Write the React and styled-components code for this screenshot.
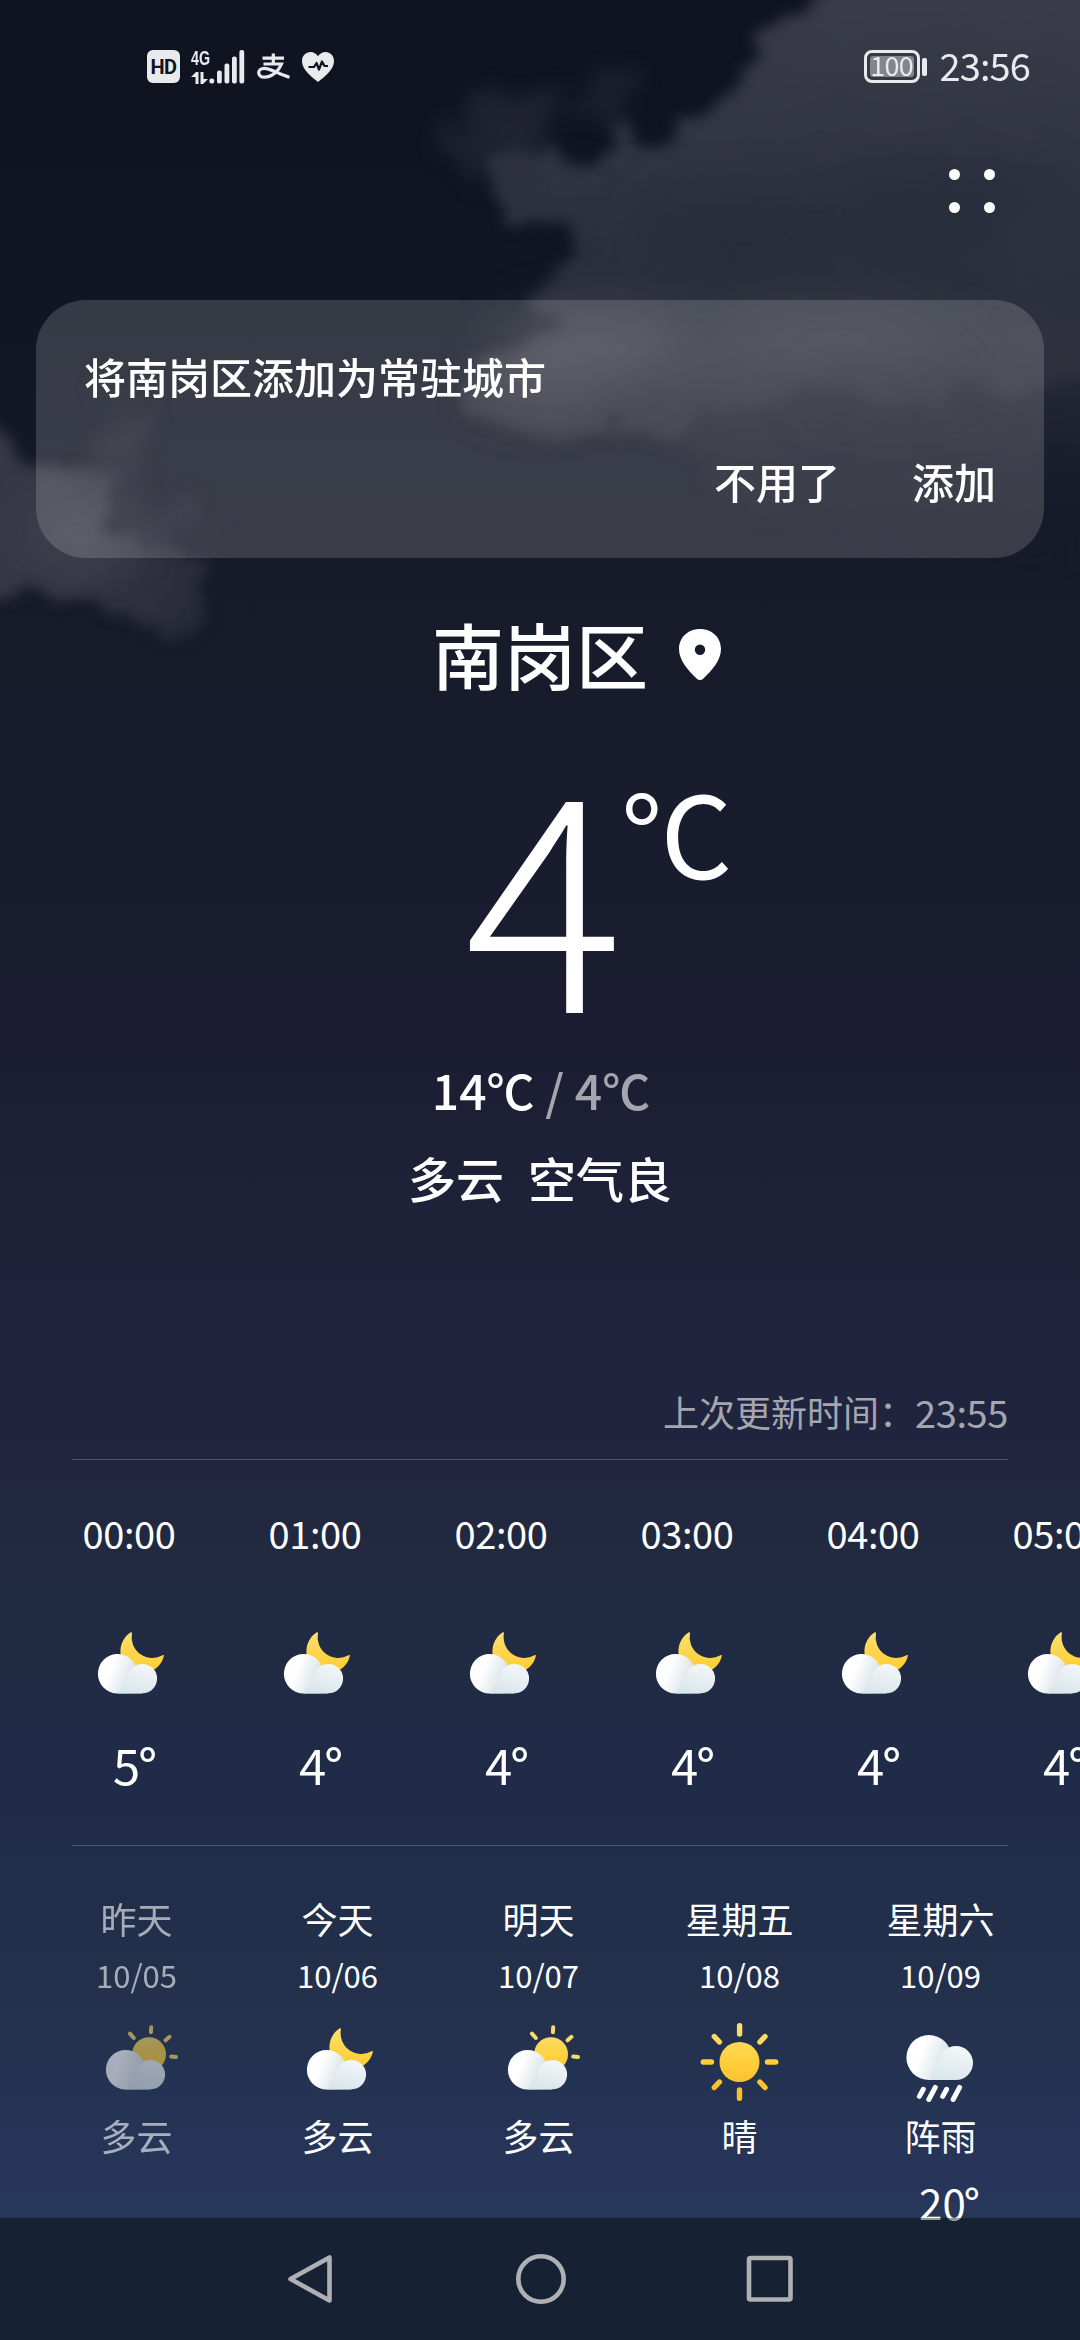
// src/App.jsx

import { useId } from "react";
import styled, { createGlobalStyle } from "styled-components";

const GlobalStyle = createGlobalStyle`
  * {
    box-sizing: border-box;
  }

  body {
    margin: 0;
    background: #101421;
    font-family: "Noto Sans CJK SC", "Noto Sans", sans-serif;
    color: #fff;
  }
`;

const Screen = styled.main`
  position: relative;
  display: flex;
  flex-direction: column;
  width: 1080px;
  height: 2340px;
  overflow: hidden;
  background: linear-gradient(
    180deg,
    #101320 0,
    #0f1522 230px,
    #171a28 560px,
    #181c2d 800px,
    #1b1c31 1020px,
    #1e2238 1200px,
    #21243e 1430px,
    #212a40 1560px,
    #1f2b48 1780px,
    #23314c 2000px,
    #26355a 2180px,
    #273857 2218px
  );
`;

const Sky = styled.svg`
  position: absolute;
  top: 0;
  left: 0;
  width: 1080px;
  height: 720px;
`;

const StatusBar = styled.header`
  position: relative;
  display: flex;
  align-items: center;
  justify-content: space-between;
  height: 133px;
  padding: 0 50px 0 147px;
`;

const StatusGroup = styled.div`
  display: flex;
  align-items: center;
  color: #e9eaee;
`;

const HdBadge = styled.span`
  display: flex;
  align-items: center;
  justify-content: center;
  width: 33px;
  height: 33px;
  border-radius: 6px;
  background: #e9eaee;
  color: #101320;
  font-family: Roboto, sans-serif;
  font-size: 20px;
  font-weight: 700;
  letter-spacing: -0.5px;
`;

const Network = styled.div`
  display: flex;
  align-items: flex-end;
  width: 54px;
  height: 35px;
  margin-left: 11px;
`;

const NetworkType = styled.div`
  display: flex;
  flex-direction: column;
  justify-content: space-between;
  width: 18px;
  height: 35px;
  font-family: "Liberation Sans Narrow", "Liberation Sans", sans-serif;
  font-size: 21px;
  font-weight: 700;
  line-height: 17px;
  white-space: nowrap;

  span {
    display: block;
    transform: scaleX(0.68);
    transform-origin: left;
  }
`;

const StatusIcon = styled.svg`
  display: block;
  margin-left: ${({ $gap }) => $gap}px;
`;

const Battery = styled.div`
  display: flex;
  align-items: center;
  justify-content: center;
  width: 56px;
  height: 33px;
  border: 3px solid #e9eaee;
  border-radius: 8px;
`;

const BatteryLevel = styled.span`
  display: flex;
  align-items: center;
  justify-content: center;
  width: 44px;
  height: 21px;
  padding-bottom: 3px;
  border-radius: 3px;
  background: #84868e;
  font-size: 27px;
  line-height: 18px;
  letter-spacing: -0.8px;
`;

const BatteryCap = styled.span`
  width: 5px;
  height: 18px;
  margin: 0 13px 0 2px;
  border-radius: 2px;
  background: #e9eaee;
`;

const Clock = styled.time`
  margin-bottom: 3px;
  font-size: 38px;
  line-height: 56px;
  letter-spacing: -0.9px;
`;

const Toolbar = styled.div`
  position: relative;
  display: flex;
  justify-content: flex-end;
  height: 167px;
  padding: 36px 85px 0 0;
`;

const MenuButton = styled.button`
  display: grid;
  grid-template-columns: 11px 11px;
  gap: 22px 24px;
  align-content: start;
  height: 44px;
  padding: 0;
  border: none;
  background: none;
`;

const Dot = styled.span`
  height: 11px;
  border-radius: 50%;
  background: #fff;
`;

const Prompt = styled.section`
  position: relative;
  display: flex;
  flex-direction: column;
  justify-content: space-between;
  height: 258px;
  margin: 0 36px;
  padding: 46px 48px 47px 48px;
  border-radius: 50px;
  background: rgba(255, 255, 255, 0.155);
`;

const PromptText = styled.p`
  margin: 0;
  font-size: 42px;
  font-weight: 500;
  line-height: 60px;
`;

const PromptActions = styled.div`
  display: flex;
  justify-content: flex-end;
  gap: 72px;
`;

const PromptButton = styled.button`
  padding: 0;
  border: none;
  background: none;
  color: #fff;
  font-family: inherit;
  font-size: 42px;
  font-weight: 500;
  line-height: 60px;
`;

const Current = styled.section`
  position: relative;
  display: flex;
  flex-direction: column;
  height: 812px;
  padding-top: 46px;
`;

const CenterRow = styled.div`
  display: grid;
  grid-template-columns: 1fr auto 1fr;
  height: ${({ $height }) => $height}px;
`;

const City = styled.h1`
  grid-column: 2;
  margin: 0;
  font-size: 72px;
  font-weight: 500;
  line-height: 98px;
`;

const Pin = styled.svg`
  margin: 24px 0 0 30px;
`;

const Temperature = styled.div`
  grid-column: 2;
  padding-left: 8px;
  font-size: 298px;
  font-weight: 300;
  line-height: 288px;
`;

const Unit = styled.span`
  margin: 11px 0 0 -3px;
  font-size: 112px;
  line-height: 160px;
`;

const Range = styled.p`
  margin: 0;
  padding-left: 2px;
  font-size: 48px;
  font-weight: 500;
  line-height: 70px;
  text-align: center;
  white-space: pre;

  span {
    color: rgba(255, 255, 255, 0.6);
  }
`;

const Condition = styled.p`
  display: flex;
  justify-content: center;
  gap: 24px;
  margin: 18px 0 0;
  font-size: 48px;
  font-weight: 500;
  line-height: 70px;
`;

const Updated = styled.p`
  display: flex;
  align-items: center;
  justify-content: flex-end;
  height: 90px;
  margin: 0 72px;
  padding-bottom: 7px;
  border-bottom: 1px solid rgba(255, 255, 255, 0.22);
  color: rgba(255, 255, 255, 0.6);
  font-size: 36px;

  time {
    font-size: 38px;
    letter-spacing: -0.4px;
  }
`;

const Hourly = styled.section`
  display: flex;
  height: 385px;
  padding: 43px 0 0 36px;
`;

const Hour = styled.div`
  display: flex;
  flex: 0 0 186px;
  flex-direction: column;
  align-items: center;
`;

const HourTime = styled.time`
  font-size: 38px;
  line-height: 60px;
  letter-spacing: -0.4px;
`;

const HourTemp = styled.span`
  margin-top: 21px;
  padding-left: 12px;
  font-size: 49px;
  line-height: 70px;
`;

const Degree = styled.span`
  margin-left: -2px;
  font-weight: 500;
`;

const Divider = styled.hr`
  flex: none;
  width: 936px;
  height: 1px;
  margin: 0 72px;
  border: none;
  background: rgba(255, 255, 255, 0.2);
`;

const WeatherIcon = styled.svg`
  display: block;
  flex: none;
  width: 84px;
  height: 84px;
  margin-top: ${({ $top }) => $top}px;
`;

const Daily = styled.section`
  display: flex;
  height: 372px;
  padding: 47px 0 0 36px;
`;

const Day = styled.div`
  display: flex;
  flex: 0 0 201px;
  flex-direction: column;
  align-items: center;
  opacity: ${({ $past }) => ($past ? 0.6 : 1)};
`;

const DayName = styled.span`
  font-size: 36px;
  line-height: 50px;
`;

const DayDate = styled.time`
  margin-top: 9px;
  font-size: 31px;
  line-height: 46px;
`;

const DayCondition = styled.span`
  margin-top: 6px;
  font-size: 36px;
  line-height: 50px;
`;

const DayHigh = styled.span`
  margin-top: 12px;
  padding-left: 18px;
  font-size: 42px;
  line-height: 60px;
`;

const NavBar = styled.nav`
  position: relative;
  display: flex;
  align-items: center;
  justify-content: center;
  gap: 169px;
  height: 122px;
  flex: none;
  padding-left: 1px;
  background: rgba(0, 0, 0, 0.4);
`;

const NavIcon = styled.svg`
  width: 60px;
  height: 60px;
  fill: none;
  stroke: #aeb0b4;
  stroke-width: 4.6;
  stroke-linejoin: round;
`;

// One cloud is a big puff, a small puff in front of it and the flat base.
const CLOUDS = {
  low: { big: [30.6, 49.7, 19.7], small: [55.4, 54.6, 14.7] },
  high: { big: [29.9, 37.5, 22.5], small: [57, 43, 17] },
};

function Cloud({ shape, id }) {
  const [bx, by, br] = CLOUDS[shape].big;
  const [sx, sy, sr] = CLOUDS[shape].small;
  return (
    <>
      <path
        d={`M${bx} ${by + br}A${br} ${br} 0 1 1 ${bx + br} ${by}L${sx} ${by + br}Z`}
        fill={`url(#${id}-big)`}
      />
      <path
        d={`M${bx} ${by + br}L${sx - sr} ${sy}A${sr} ${sr} 0 1 1 ${sx} ${sy + sr}Z`}
        fill={`url(#${id}-small)`}
      />
    </>
  );
}

function Weather({ kind, top }) {
  const id = useId().replace(/[^a-zA-Z0-9]/g, "");
  return (
    <WeatherIcon viewBox="0 0 84 84" $top={top} aria-hidden="true">
      <defs>
        <linearGradient id={`${id}-gold`} x1="0" y1="0" x2="0" y2="84" gradientUnits="userSpaceOnUse">
          <stop offset="0.1" stopColor="#f9e070" />
          <stop offset="0.45" stopColor="#ffd13d" />
          <stop offset="0.8" stopColor="#fdbf2a" />
        </linearGradient>
        <linearGradient id={`${id}-big`} x1="0" y1="0.25" x2="1" y2="0.6">
          <stop offset="0.3" stopColor="#ffffff" />
          <stop offset="0.75" stopColor="#dde6eb" />
        </linearGradient>
        <linearGradient
          id={`${id}-small`}
          x1="54"
          y1={kind === "rain" ? 26 : 40}
          x2="46"
          y2={kind === "rain" ? 60 : 69}
          gradientUnits="userSpaceOnUse"
        >
          <stop offset="0" stopColor="#f3f6f8" />
          <stop offset="1" stopColor="#d9e6ec" />
        </linearGradient>
      </defs>

      {kind === "moon" && (
        <path
          d="M44.3 8A22 22 0 1 0 77 31.2Q76.5 30.9 75.500 31.3A20.800 20.800 0 0 1 45 9Z"
          fill={`url(#${id}-gold)`}
        />
      )}
      {kind === "partly" && (
        <>
          <circle cx="54" cy="34.2" r="17" fill={`url(#${id}-gold)`} />
          <path
            d="M56.2 7.2 55.9 12.2M35 13.6 38.8 18M74.5 16.8 70.6 20.3M76.2 36.6 81 36.9"
            fill="none"
            stroke="#fadb66"
            strokeWidth="4"
            strokeLinecap="round"
          />
        </>
      )}
      {kind === "sunny" && (
        <>
          <circle cx="41.5" cy="42" r="20" fill={`url(#${id}-gold)`} />
          <path
            d="M41.6 5.8V14M41.5 70V78.2M5.3 42H13.5M69.5 42H77.7M16.3 16.5 21.4 22M67 16.5 61.9 22M16.3 67.5 21.4 62M67 67.5 61.9 62"
            fill="none"
            stroke={`url(#${id}-gold)`}
            strokeWidth="5.4"
            strokeLinecap="round"
          />
        </>
      )}
      {kind === "rain" && (
        <path
          d="M24.3 69.3 20.4 76.4M36.3 67.4 29.8 79.5M47.6 69.3 43.7 76.4M60.6 67.4 54.1 79.5"
          stroke="#fff"
          strokeWidth="5"
          strokeLinecap="round"
        />
      )}
      {kind !== "sunny" && <Cloud shape={kind === "rain" ? "high" : "low"} id={id} />}
    </WeatherIcon>
  );
}

// Night clouds drifting behind the header: soft blobs with a torn edge.
// The filters work in sRGB, linear light bands badly in colours this dark.
function NightSky() {
  return (
    <Sky viewBox="0 0 1080 720" colorInterpolationFilters="sRGB" aria-hidden="true">
      <defs>
        <filter id="torn" x="-10%" y="-10%" width="120%" height="120%">
          <feTurbulence type="fractalNoise" baseFrequency="0.022" numOctaves="5" seed="8" result="n" />
          <feDisplacementMap in="SourceGraphic" in2="n" scale="60" xChannelSelector="R" yChannelSelector="G" />
          <feGaussianBlur stdDeviation="7" />
        </filter>
        <filter id="haze" x="-60%" y="-60%" width="220%" height="220%">
          <feGaussianBlur stdDeviation="26" />
        </filter>
        <filter id="wisp" x="-60%" y="-60%" width="220%" height="220%">
          <feTurbulence type="fractalNoise" baseFrequency="0.025" numOctaves="4" seed="3" result="n" />
          <feDisplacementMap in="SourceGraphic" in2="n" scale="90" xChannelSelector="R" yChannelSelector="G" />
          <feGaussianBlur stdDeviation="9" />
        </filter>
        <linearGradient id="bank" x1="0" y1="0" x2="0" y2="560" gradientUnits="userSpaceOnUse">
          <stop offset="0" stopColor="#393b49" />
          <stop offset="0.25" stopColor="#323542" />
          <stop offset="0.48" stopColor="#2a2f3b" />
          <stop offset="0.62" stopColor="#2f323e" />
          <stop offset="0.78" stopColor="#2b2d39" stopOpacity="0.85" />
        </linearGradient>
        <linearGradient id="tail" x1="0" y1="360" x2="0" y2="560" gradientUnits="userSpaceOnUse">
          <stop offset="0" stopColor="#282b38" />
          <stop offset="1" stopColor="#1c1e2c" stopOpacity="0" />
        </linearGradient>
        <linearGradient id="drift" x1="20" y1="470" x2="190" y2="650" gradientUnits="userSpaceOnUse">
          <stop offset="0" stopColor="#363845" />
          <stop offset="0.5" stopColor="#363845" />
          <stop offset="1" stopColor="#222533" />
        </linearGradient>
      </defs>

      <g filter="url(#torn)">
        <path d="M640 340 1140 300V560L900 540 720 500Z" fill="url(#tail)" />
        <path
          d="M880 -40 800 9 777 27 759 45 746 62 728 94 710 118 683 123 657 134 621 138 599 163 558 150 500 150 487 174 510 219 572 223 572 250 545 277 536 297 555 330 514 341 474 357 469 402 487 428 558 437 603 424 670 437 728 415 800 390 920 400 1140 370V-40Z"
          fill="url(#bank)"
        />
        <path
          d="M-40 420 0 437 13 460 37 465 80 477 112 490 120 527 143 547 170 557 202 573 200 620 180 640 143 620 100 610 50 593 -40 612Z"
          fill="url(#drift)"
        />
      </g>

      <g filter="url(#wisp)" fill="#2b2e3b">
        <ellipse cx="500" cy="118" rx="62" ry="26" opacity="0.55" />
        <ellipse cx="610" cy="90" rx="38" ry="34" opacity="0.45" />
        <ellipse cx="505" cy="160" rx="36" ry="26" opacity="0.5" />
        <ellipse cx="118" cy="428" rx="22" ry="20" opacity="0.5" />
        <ellipse cx="112" cy="470" rx="36" ry="28" opacity="0.45" />
        <ellipse cx="160" cy="530" rx="40" ry="24" opacity="0.4" />
      </g>

      <g filter="url(#haze)">
        <ellipse cx="590" cy="345" rx="90" ry="36" fill="#62626d" opacity="0.34" />
        <ellipse cx="540" cy="385" rx="60" ry="24" fill="#5a5a66" opacity="0.26" />
        <ellipse cx="830" cy="335" rx="120" ry="30" fill="#50525e" opacity="0.28" />
        <ellipse cx="740" cy="232" rx="100" ry="34" fill="#222835" opacity="0.5" />
        <ellipse cx="940" cy="205" rx="120" ry="34" fill="#22273a" opacity="0.5" />
        <ellipse cx="1050" cy="245" rx="50" ry="22" fill="#3a3f49" opacity="0.45" />
        <ellipse cx="900" cy="395" rx="90" ry="20" fill="#1e212e" opacity="0.45" />
        <ellipse cx="80" cy="530" rx="50" ry="22" fill="#63636f" opacity="0.32" />
      </g>
    </Sky>
  );
}

const hours = [
  { time: "00:00", temp: 5 },
  { time: "01:00", temp: 4 },
  { time: "02:00", temp: 4 },
  { time: "03:00", temp: 4 },
  { time: "04:00", temp: 4 },
  { time: "05:00", temp: 4 },
];

const days = [
  { name: "昨天", date: "10/05", kind: "partly", condition: "多云", past: true },
  { name: "今天", date: "10/06", kind: "moon", condition: "多云" },
  { name: "明天", date: "10/07", kind: "partly", condition: "多云" },
  { name: "星期五", date: "10/08", kind: "sunny", condition: "晴" },
  { name: "星期六", date: "10/09", kind: "rain", condition: "阵雨", high: 20 },
];

export default function App() {
  return (
    <>
      <GlobalStyle />
      <Screen>
        <NightSky />

        <StatusBar>
          <StatusGroup>
            <HdBadge>HD</HdBadge>
            <Network>
              <NetworkType>
                <span>4G</span>
                <svg width="18" height="12" viewBox="0 0 18 12" fill="#e9eaee" aria-hidden="true">
                  <path d="M0 5 5 0H7.5V12H4.5V5ZM9.5 0H12.5V7H17L12 12H9.5Z" />
                </svg>
              </NetworkType>
              <svg width="36" height="34" viewBox="0 0 36 34" fill="#e9eaee" aria-hidden="true">
                <rect x="0.4" y="28.5" width="4.8" height="5" rx="2" />
                <rect x="8" y="20.5" width="4.8" height="13" rx="2" />
                <rect x="15.5" y="13.5" width="4.8" height="20" rx="2" />
                <rect x="23" y="6.5" width="4.8" height="27" rx="2" />
                <rect x="30.4" y="0" width="4.8" height="33.5" rx="2" />
              </svg>
            </Network>
            <StatusIcon $gap={12} width="34" height="28" viewBox="0 0 34 28" aria-hidden="true">
              <path
                d="M5.5 5.2H27M16.3 0.5V11M6.5 11H24.5C22 17.5 15 24.2 7.5 24.2 3.8 24.2 1.7 22.3 1.7 19.7 1.7 17 4.2 15.3 7.2 15.3 14 15.3 22 21.5 32.5 24.2"
                fill="none"
                stroke="#e9eaee"
                strokeWidth="3.2"
              />
            </StatusIcon>
            <StatusIcon $gap={10} width="34" height="32" viewBox="0 0 34 32" aria-hidden="true">
              <path
                d="M17 31C11 26 1 19 1 10 1 4.5 5 1 9.5 1 12.5 1 15.5 2.7 17 5.2 18.5 2.7 21.5 1 24.5 1 29 1 33 4.5 33 10 33 19 23 26 17 31Z"
                fill="#e9eaee"
              />
              <path
                d="M7.5 16H13L15.5 12 18 18.5 21 10.5 23.5 15H27"
                fill="none"
                stroke="#101320"
                strokeWidth="2.2"
                strokeLinejoin="round"
              />
            </StatusIcon>
          </StatusGroup>
          <StatusGroup>
            <Battery>
              <BatteryLevel>100</BatteryLevel>
            </Battery>
            <BatteryCap />
            <Clock>23:56</Clock>
          </StatusGroup>
        </StatusBar>

        <Toolbar>
          <MenuButton type="button" aria-label="菜单">
            <Dot />
            <Dot />
            <Dot />
            <Dot />
          </MenuButton>
        </Toolbar>

        <Prompt>
          <PromptText>将南岗区添加为常驻城市</PromptText>
          <PromptActions>
            <PromptButton type="button">不用了</PromptButton>
            <PromptButton type="button">添加</PromptButton>
          </PromptActions>
        </Prompt>

        <Current>
          <CenterRow $height={135}>
            <City>南岗区</City>
            <Pin width="44" height="54" viewBox="0 0 44 54" aria-hidden="true">
              <path
                d="M22 1C10 1 1 9.5 1 21 1 33 11 43 18.5 50.5Q22 53.5 25.5 50.5C33 43 43 33 43 21 43 9.5 34 1 22 1ZM22 16.5A5.2 5.2 0 1 1 22 26.9 5.2 5.2 0 0 1 22 16.5Z"
                fill="#fff"
              />
            </Pin>
          </CenterRow>
          <CenterRow $height={315}>
            <Temperature>4</Temperature>
            <Unit>℃</Unit>
          </CenterRow>
          <Range>
            14℃<span> / 4℃</span>
          </Range>
          <Condition>
            <span>多云</span>
            <span>空气良</span>
          </Condition>
        </Current>

        <Updated>
          上次更新时间：<time>23:55</time>
        </Updated>

        <Hourly>
          {hours.map((hour) => (
            <Hour key={hour.time}>
              <HourTime>{hour.time}</HourTime>
              <Weather kind="moon" top={61} />
              <HourTemp>
                {hour.temp}
                <Degree>°</Degree>
              </HourTemp>
            </Hour>
          ))}
        </Hourly>

        <Divider />

        <Daily>
          {days.map((day) => (
            <Day key={day.date} $past={day.past}>
              <DayName>{day.name}</DayName>
              <DayDate>{day.date}</DayDate>
              <Weather kind={day.kind} top={22} />
              <DayCondition>{day.condition}</DayCondition>
              {day.high && (
                <DayHigh>
                  {day.high}
                  <Degree>°</Degree>
                </DayHigh>
              )}
            </Day>
          ))}
        </Daily>

        <NavBar>
          <NavIcon viewBox="0 0 60 60" aria-hidden="true">
            <path d="M47.5 8.5V51.5L8.5 30Z" />
          </NavIcon>
          <NavIcon viewBox="0 0 60 60" aria-hidden="true">
            <circle cx="30" cy="30" r="22.7" />
          </NavIcon>
          <NavIcon viewBox="0 0 60 60" aria-hidden="true">
            <rect x="9" y="9" width="41.5" height="41.5" rx="1.5" />
          </NavIcon>
        </NavBar>
      </Screen>
    </>
  );
}
